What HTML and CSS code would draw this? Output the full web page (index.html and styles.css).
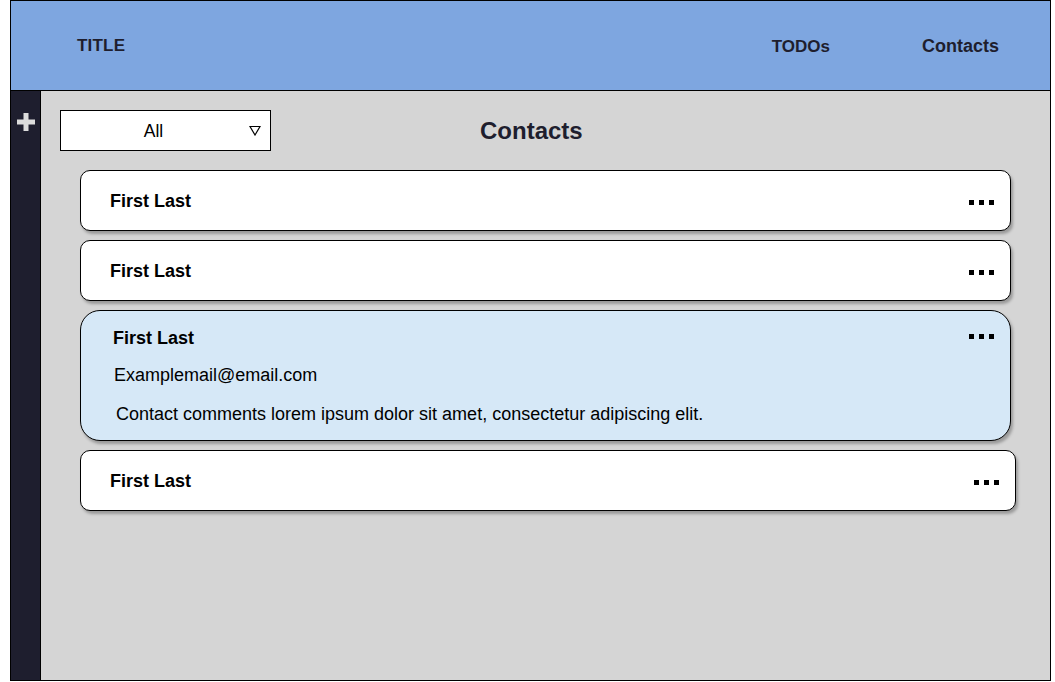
FILE: index.html
```html
<!DOCTYPE html>
<html>
<head>
<meta charset="utf-8">
<link rel="stylesheet" href="styles.css">
</head>
<body>
<div class="frame">
  <header class="header">
    <div class="title">TITLE</div>
    <nav class="nav">
      <span class="nav-item todos">TODOs</span>
      <span class="nav-item contacts">Contacts</span>
    </nav>
  </header>
  <div class="body">
    <aside class="sidebar">
      <svg class="plus" width="18" height="18" viewBox="0 0 18 18"><rect x="6.5" y="0" width="5" height="18" fill="#dcdcdc"/><rect x="0" y="6.5" width="18" height="5" fill="#dcdcdc"/></svg>
    </aside>
    <main class="main">
      <div class="toolbar">
        <div class="select">
          <span class="select-label">All</span>
          <svg class="caret" width="12" height="11" viewBox="0 0 12 11"><path d="M1 1.5 H11 L6 10 Z" fill="none" stroke="#000" stroke-width="1.2" stroke-linejoin="miter"/></svg>
        </div>
        <h1 class="heading">Contacts</h1>
      </div>
      <div class="list">
        <div class="card">
          <span class="name">First Last</span>
          <span class="dots"><i></i><i></i><i></i></span>
        </div>
        <div class="card">
          <span class="name">First Last</span>
          <span class="dots"><i></i><i></i><i></i></span>
        </div>
        <div class="card card-open">
          <div class="open-top">
            <span class="name">First Last</span>
            <span class="dots"><i></i><i></i><i></i></span>
          </div>
          <div class="email">Examplemail@email.com</div>
          <div class="comment">Contact comments lorem ipsum dolor sit amet, consectetur adipiscing elit.</div>
        </div>
        <div class="card card-wide">
          <span class="name">First Last</span>
          <span class="dots"><i></i><i></i><i></i></span>
        </div>
      </div>
    </main>
  </div>
</div>
</body>
</html>
```

FILE: styles.css
```css
* { box-sizing: border-box; }
html, body { margin: 0; padding: 0; background: #fff; }
body { font-family: "Liberation Sans", Arial, sans-serif; color: #000; }

.frame {
  margin-left: 10px;
  width: 1041px;
  height: 681px;
  border: 1px solid #000;
  display: flex;
  flex-direction: column;
  background: #d5d5d5;
}

.header {
  height: 90px;
  flex: none;
  background: #7ea6e0;
  border-bottom: 1px solid #000;
  display: flex;
  align-items: center;
  padding-left: 66px;
  color: #1e1e2e;
  font-weight: bold;
  font-size: 18px;
}
.title { font-size: 17px; letter-spacing: 0.2px; }
.nav { margin-left: auto; display: flex; align-items: baseline; padding-top: 2px; }
.nav-item { display: block; }
.todos { font-size: 17px; margin-right: 92px; }
.contacts { margin-right: 51px; }

.body { flex: 1; display: flex; min-height: 0; }

.sidebar {
  width: 30px;
  flex: none;
  background: #1e1e2e;
  border-right: 1px solid #000;
  padding: 22px 0 0 6px;
}
.plus { display: block; }

.main { flex: 1; padding: 19px 0 0 19px; }

.toolbar { display: flex; align-items: center; }
.select {
  width: 211px;
  height: 41px;
  background: #fff;
  border: 1px solid #000;
  position: relative;
  display: flex;
  align-items: center;
  justify-content: center;
  font-size: 17.5px;
  padding: 2px 24px 0 0;
}
.caret { position: absolute; right: 9px; top: 14px; }
.heading {
  margin: 0 0 0 209px;
  font-size: 24px;
  font-weight: bold;
  color: #1e1e2e;
}

.list {
  margin: 19px 0 0 20px;
  display: flex;
  flex-direction: column;
  gap: 9px;
}
.card {
  width: 931px;
  height: 61px;
  background: #fff;
  border: 1px solid #000;
  border-radius: 10px;
  box-shadow: 2px 3px 3px rgba(0,0,0,0.28);
  display: flex;
  align-items: center;
  padding: 1px 16px 0 29px;
}
.card-wide { width: 936px; }
.name { font-weight: bold; font-size: 18px; }
.dots { margin-left: auto; display: flex; gap: 5px; padding-top: 3px; }
.dots i { display: block; width: 5px; height: 5px; background: #000; }

.card-open {
  height: 131px;
  background: #d6e8f7;
  border-radius: 20px;
  flex-direction: column;
  align-items: stretch;
  padding: 15px 16px 0 32px;
}
.open-top { display: flex; align-items: center; height: 24px; }
.open-top .dots { padding-top: 0; margin-top: -3px; }
.email { font-size: 18px; margin-top: 15px; margin-left: 1px; }
.comment { font-size: 18px; margin-top: 18px; margin-left: 3px; }
```
